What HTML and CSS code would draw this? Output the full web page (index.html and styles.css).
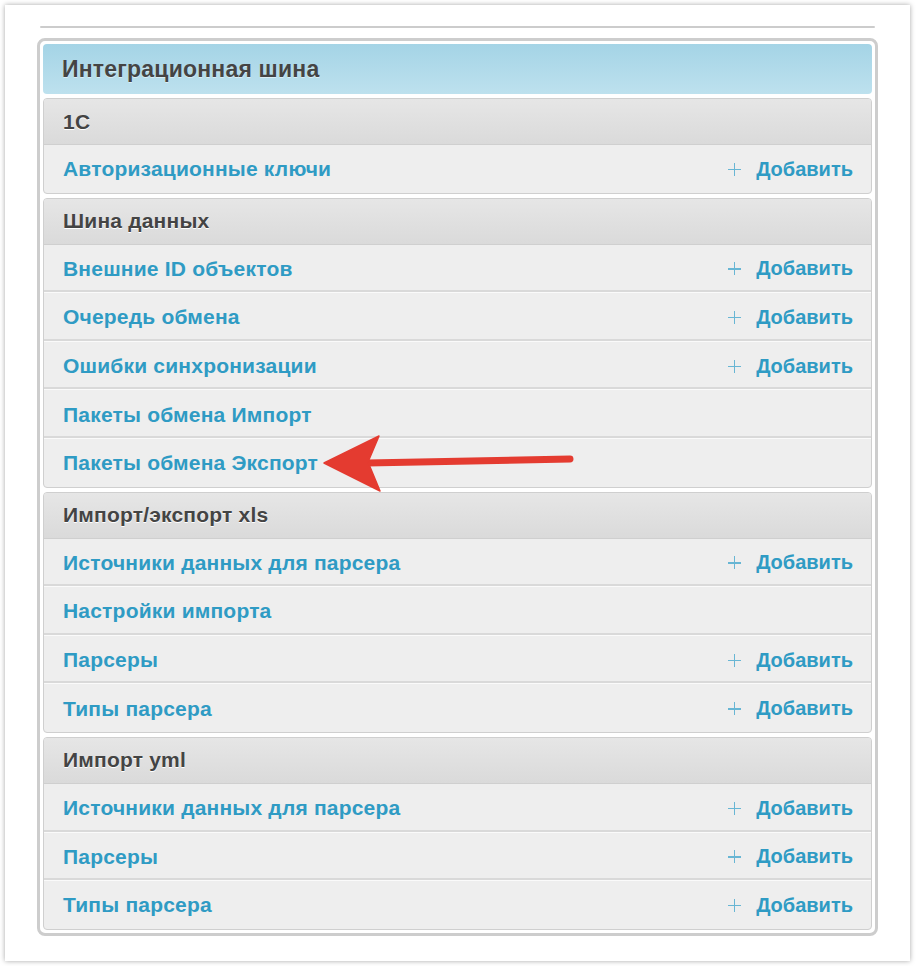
FILE: index.html
```html
<!DOCTYPE html>
<html lang="ru">
<head>
  <meta charset="UTF-8">
  <title>Интеграционная шина</title>
  <link rel="stylesheet" href="styles.css">
</head>
<body>

  <div class="sheet">
    <hr class="top-rule">

    <!-- Module panel -->
    <div class="module">
      <div class="module-title">Интеграционная шина</div>

      <div class="app">
        <div class="app-title">1С</div>
        <div class="model"><a href="#">Авторизационные ключи</a><a class="add" href="#"><span class="plus"></span>Добавить</a></div>
      </div>

      <div class="app">
        <div class="app-title">Шина данных</div>
        <div class="model"><a href="#">Внешние ID объектов</a><a class="add" href="#"><span class="plus"></span>Добавить</a></div>
        <div class="model"><a href="#">Очередь обмена</a><a class="add" href="#"><span class="plus"></span>Добавить</a></div>
        <div class="model"><a href="#">Ошибки синхронизации</a><a class="add" href="#"><span class="plus"></span>Добавить</a></div>
        <div class="model"><a href="#">Пакеты обмена Импорт</a></div>
        <div class="model"><a href="#">Пакеты обмена Экспорт</a></div>
      </div>

      <div class="app">
        <div class="app-title">Импорт/экспорт xls</div>
        <div class="model"><a href="#">Источники данных для парсера</a><a class="add" href="#"><span class="plus"></span>Добавить</a></div>
        <div class="model"><a href="#">Настройки импорта</a></div>
        <div class="model"><a href="#">Парсеры</a><a class="add" href="#"><span class="plus"></span>Добавить</a></div>
        <div class="model"><a href="#">Типы парсера</a><a class="add" href="#"><span class="plus"></span>Добавить</a></div>
      </div>

      <div class="app">
        <div class="app-title">Импорт yml</div>
        <div class="model"><a href="#">Источники данных для парсера</a><a class="add" href="#"><span class="plus"></span>Добавить</a></div>
        <div class="model"><a href="#">Парсеры</a><a class="add" href="#"><span class="plus"></span>Добавить</a></div>
        <div class="model"><a href="#">Типы парсера</a><a class="add" href="#"><span class="plus"></span>Добавить</a></div>
      </div>
    </div>

    <!-- Annotation arrow -->
    <svg class="arrow" width="905" height="956" viewBox="0 0 905 956">
      <line x1="565" y1="454" x2="362" y2="458" stroke="#e43b30" stroke-width="7" stroke-linecap="round"/>
      <polygon points="319,458 374,431 363,457 375,486" fill="#e43b30" stroke="#e43b30" stroke-width="1.5" stroke-linejoin="round"/>
    </svg>
  </div>

</body>
</html>
```

FILE: styles.css
```css
/* Global */
body {
  margin: 0;
  padding: 0;
  background-color: #ffffff;
  font-family: 'Liberation Sans', Arial, sans-serif;
}

/* Screenshot sheet */
.sheet {
  position: relative;
  width: 905px;
  height: 956px;
  margin: 5px;
  padding: 20px 32px 0;
  box-sizing: border-box;
  background-color: #fff;
  box-shadow: 0 0 5px rgba(0, 0, 0, 0.35);
}

.top-rule {
  height: 2px;
  margin: 1px 3px 0;
  border: none;
  border-radius: 1px;
  background-color: #cccccc;
}

/* Module panel */
.module {
  margin-top: 10px;
  padding: 3px;
  border: 3px solid #cdcdcd;
  border-radius: 8px;
  display: flex;
  flex-direction: column;
  gap: 4px;
}

.module-title {
  height: 50px;
  padding: 0 19px;
  display: flex;
  align-items: center;
  border-radius: 4px;
  background: linear-gradient(#a4d4e6, #bde1ee);
  color: #444;
  font-size: 23px;
  font-weight: bold;
  letter-spacing: 0.2px;
  text-shadow: 0 1px 0 rgba(255, 255, 255, 0.5);
}

.app {
  border: 1px solid #cfcfcf;
  border-radius: 4px;
  overflow: hidden;
  background-color: #eeeeee;
}

.app-title {
  height: 45px;
  padding: 0 19px;
  display: flex;
  align-items: center;
  background: linear-gradient(#e6e6e6, #dadada);
  border-bottom: 1px solid #cfcfcf;
  color: #444;
  font-size: 21px;
  font-weight: bold;
  letter-spacing: 0.2px;
  text-shadow: 0 1px 0 #fff;
}

.model {
  height: 47.6px;
  padding: 1px 18px 0 19px;
  box-sizing: border-box;
  display: flex;
  align-items: center;
  justify-content: space-between;
  border-top: 1px solid #fafafa;
  box-shadow: 0 -2px 0 #d9d9d9;
  font-size: 21px;
  font-weight: bold;
  letter-spacing: 0.2px;
}

.model + .model {
  height: 48.6px;
}

.app-title + .model {
  border-top: none;
  box-shadow: none;
}

.model a {
  color: #2f9bc4;
  text-decoration: none;
}

.add {
  display: flex;
  align-items: center;
  font-size: 20px;
  letter-spacing: 0;
}

.plus {
  position: relative;
  width: 13px;
  height: 13px;
  margin-right: 15px;
}

.plus::before,
.plus::after {
  content: "";
  position: absolute;
  background-color: #68b6d4;
}

.plus::before {
  left: 0;
  top: 6px;
  width: 13px;
  height: 1.5px;
}

.plus::after {
  left: 5.75px;
  top: 0;
  width: 1.5px;
  height: 13px;
}

/* Annotation overlay */
.arrow {
  position: absolute;
  left: 0;
  top: 0;
  pointer-events: none;
}
```
